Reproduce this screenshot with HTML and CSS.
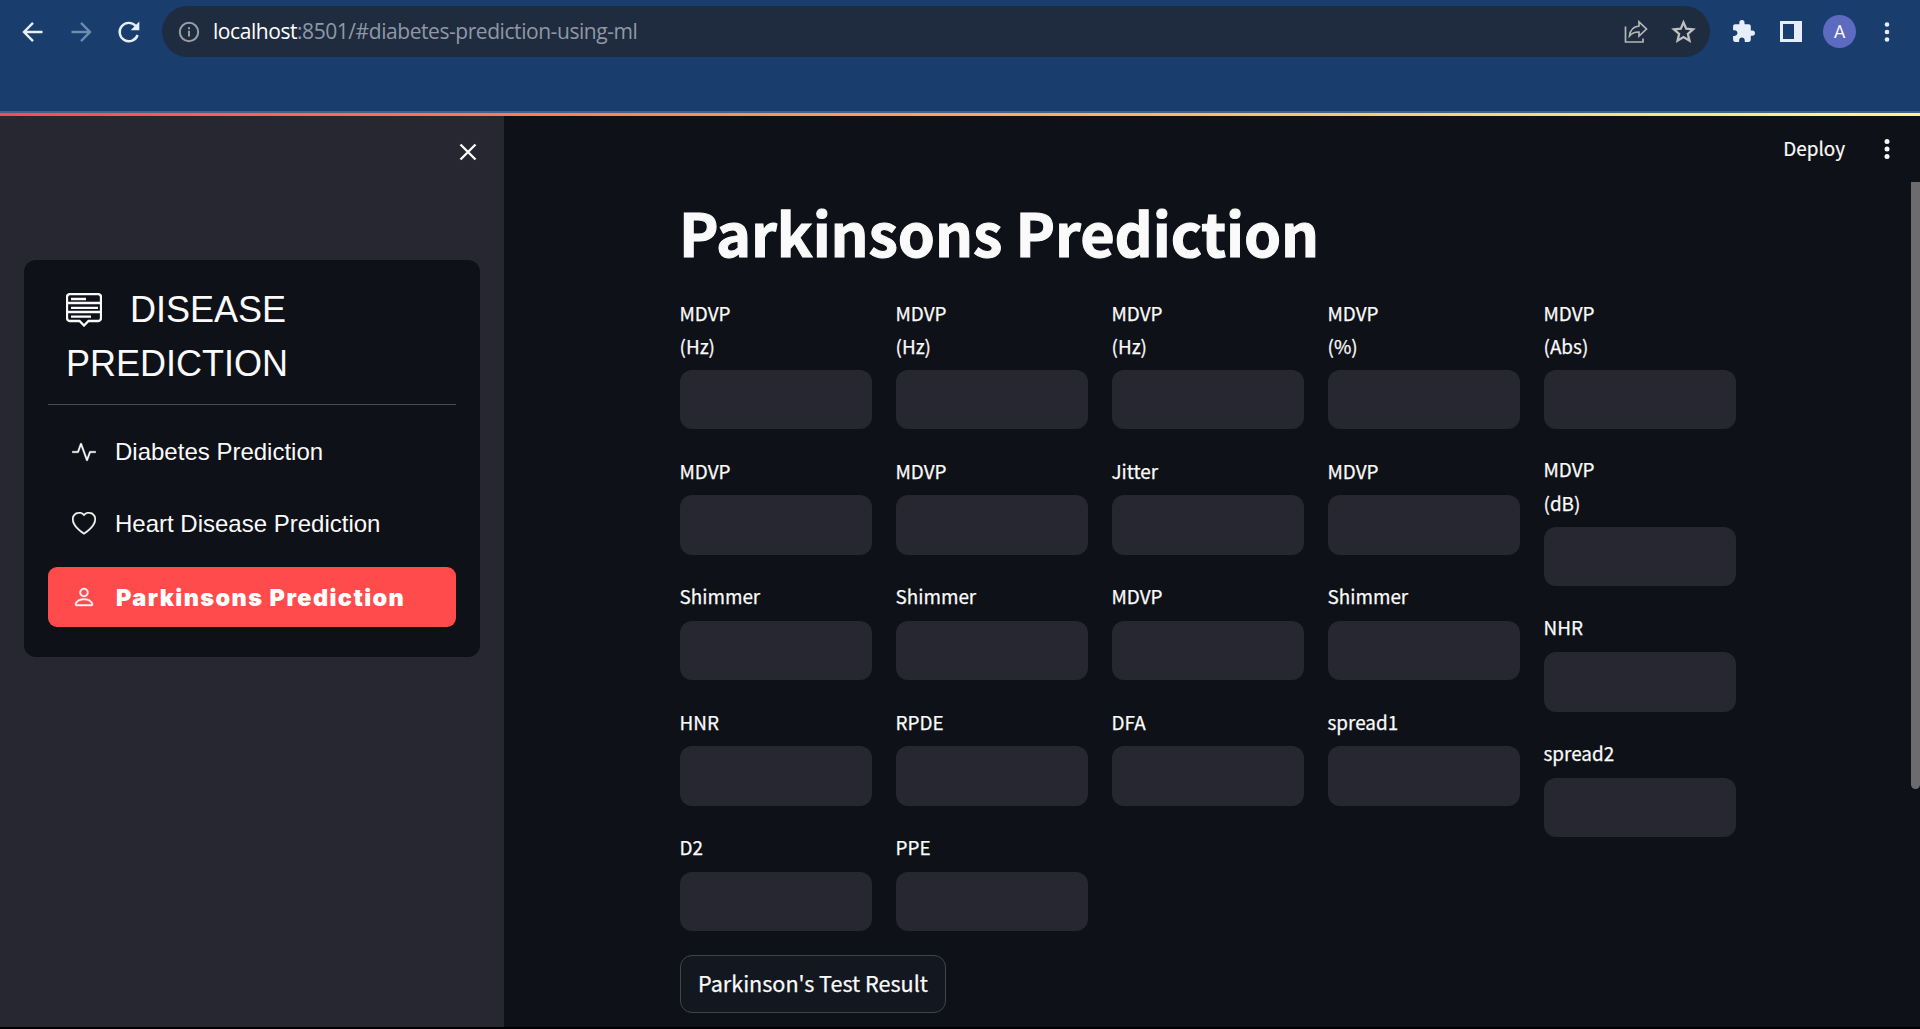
FILE: index.html
```html
<!DOCTYPE html>
<html lang="en">
<head>
<meta charset="utf-8">
<title>Parkinsons Prediction</title>
<link rel="stylesheet" href="styles.css">
</head>
<body>
<header class="browser">
  <nav class="toolbar">
    <svg class="nav-icon" viewBox="0 0 24 24"><path d="M21.5 12H3.5M12 2.8 3 12l9 9.2"/></svg>
    <svg class="nav-icon dim" viewBox="0 0 24 24"><path d="M2.5 12h18M12 2.8 21 12l-9 9.2"/></svg>
    <svg class="nav-icon" viewBox="0 0 24 24"><path d="M20.6 15A9.2 9.2 0 1 1 18.8 6"/><path class="solid" d="M22.3 1.6v8.6h-8.6z"/></svg>
    <div class="omnibox">
      <svg class="info" viewBox="0 0 22 22"><circle cx="11" cy="11" r="9.2"/><path d="M11 9.8v5.6M11 6.2v2"/></svg>
      <span class="url"><b>localhost</b>:8501/#diabetes-prediction-using-ml</span>
      <svg class="share" viewBox="0 0 24 24"><path d="M1.5 6.500V22H19v-3.500"/><path d="M15 1.800 22.500 9 15 16v-4c-4-.2-7 1-9.500 4 .5-6 4-9.400 9.500-10z"/></svg>
      <svg class="star" viewBox="0 0 24 24"><path d="M12 3.200l2.600 6.100 6.600.6-5 4.400 1.500 6.500-5.700-3.500-5.700 3.500 1.500-6.500-5-4.400 6.600-.6z"/></svg>
    </div>
    <svg class="puzzle" viewBox="0 0 24 24"><path d="M20.5 11H19V7c0-1.100-.9-2-2-2h-4V3.500a2.500 2.500 0 0 0-5 0V5H4c-1.100 0-1.990.9-1.990 2v3.800H3.500c1.490 0 2.700 1.210 2.700 2.700s-1.210 2.700-2.700 2.700H2V20c0 1.100.9 2 2 2h3.800v-1.500c0-1.490 1.210-2.700 2.700-2.700s2.700 1.210 2.700 2.700V22H17c1.100 0 2-.9 2-2v-4h1.500a2.500 2.500 0 0 0 0-5z"/></svg>
    <svg class="panel" viewBox="0 0 22 21"><path fill-rule="evenodd" d="M0 0h22v21H0zM3 3v15h11V3z"/></svg>
    <span class="avatar">A</span>
    <svg class="dots chrome-dots" viewBox="0 0 6 20"><circle cx="3" cy="2.500" r="2.300"/><circle cx="3" cy="10" r="2.300"/><circle cx="3" cy="17.500" r="2.300"/></svg>
  </nav>
</header>
<div class="decoration"></div>
<div class="app">
  <aside class="sidebar">
    <svg class="close" viewBox="0 0 18 18"><path d="M1.500 1.500l15 15M16.500 1.500l-15 15"/></svg>
    <section class="menu">
      <h2 class="menu-title"><svg class="menu-icon" viewBox="0 0 36 34"><path d="M4 1h28a3 3 0 0 1 3 3v21a3 3 0 0 1-3 3H22.500L18 32.500 13.500 28H4a3 3 0 0 1-3-3V4a3 3 0 0 1 3-3zM1 10h34M1 19h34"/><path d="M5 6h15M5 14.800h27M5 23.600h20"/></svg>DISEASE PREDICTION</h2>
      <ul class="links">
        <li class="link"><svg viewBox="0 0 16 16"><path d="M6 2a.5.5 0 0 1 .47.33L10 12.036l1.530-4.208A.5.5 0 0 1 12 7.500h3.500a.5.5 0 0 1 0 1h-3.150l-1.880 5.170a.5.5 0 0 1-.94 0L6 3.964 4.470 8.171A.5.5 0 0 1 4 8.500H.5a.5.5 0 0 1 0-1h3.150l1.880-5.170A.5.5 0 0 1 6 2Z"/></svg>Diabetes Prediction</li>
        <li class="link"><svg viewBox="0 0 16 16"><path d="m8 2.748-.717-.737C5.600.281 2.514.878 1.400 3.053c-.523 1.023-.641 2.500.314 4.385.92 1.815 2.834 3.989 6.286 6.357 3.452-2.368 5.365-4.542 6.286-6.357.955-1.886.838-3.362.314-4.385C13.486.878 10.400.28 8.717 2.010L8 2.748zM8 15C-7.333 4.868 3.279-3.040 7.824 1.143c.06.055.119.112.176.171a3.120 3.120 0 0 1 .176-.17C12.720-3.042 23.333 4.867 8 15z"/></svg>Heart Disease Prediction</li>
        <li class="link active"><svg viewBox="0 0 16 16"><path d="M8 8a3 3 0 1 0 0-6 3 3 0 0 0 0 6zm2-3a2 2 0 1 1-4 0 2 2 0 0 1 4 0zm4 8c0 1-1 1-1 1H3s-1 0-1-1 1-4 6-4 6 3 6 4zm-1-.004c-.001-.246-.154-.986-.832-1.664C11.516 10.680 10.289 10 8 10c-2.290 0-3.516.68-4.168 1.332-.678.678-.83 1.418-.832 1.664h10z"/></svg>Parkinsons Prediction</li>
      </ul>
    </section>
  </aside>
  <main class="main">
    <div class="app-bar"><span class="deploy">Deploy</span><svg class="dots" viewBox="0 0 6 20"><circle cx="3" cy="2.500" r="2.500"/><circle cx="3" cy="10" r="2.500"/><circle cx="3" cy="17.500" r="2.500"/></svg></div>
    <div class="scrollbar"></div>
    <div class="content">
      <h1 class="title">Parkinsons Prediction</h1>
      <div class="columns">
        <div class="column">
          <label class="field"><span class="label">MDVP<br>(Hz)</span><input class="input"></label>
          <label class="field"><span class="label">MDVP</span><input class="input"></label>
          <label class="field"><span class="label">Shimmer</span><input class="input"></label>
          <label class="field"><span class="label">HNR</span><input class="input"></label>
          <label class="field"><span class="label">D2</span><input class="input"></label>
        </div>
        <div class="column">
          <label class="field"><span class="label">MDVP<br>(Hz)</span><input class="input"></label>
          <label class="field"><span class="label">MDVP</span><input class="input"></label>
          <label class="field"><span class="label">Shimmer</span><input class="input"></label>
          <label class="field"><span class="label">RPDE</span><input class="input"></label>
          <label class="field"><span class="label">PPE</span><input class="input"></label>
        </div>
        <div class="column">
          <label class="field"><span class="label">MDVP<br>(Hz)</span><input class="input"></label>
          <label class="field"><span class="label">Jitter</span><input class="input"></label>
          <label class="field"><span class="label">MDVP</span><input class="input"></label>
          <label class="field"><span class="label">DFA</span><input class="input"></label>
        </div>
        <div class="column">
          <label class="field"><span class="label">MDVP<br>(%)</span><input class="input"></label>
          <label class="field"><span class="label">MDVP</span><input class="input"></label>
          <label class="field"><span class="label">Shimmer</span><input class="input"></label>
          <label class="field"><span class="label">spread1</span><input class="input"></label>
        </div>
        <div class="column">
          <label class="field"><span class="label">MDVP<br>(Abs)</span><input class="input"></label>
          <label class="field"><span class="label">MDVP<br>(dB)</span><input class="input"></label>
          <label class="field"><span class="label">NHR</span><input class="input"></label>
          <label class="field"><span class="label">spread2</span><input class="input"></label>
        </div>
      </div>
      <button class="button">Parkinson's Test Result</button>
    </div>
  </main>
</div>
</body>
</html>
```
FILE: styles.css
```css
* { box-sizing: border-box; }
body {
  margin: 0;
  height: 1029px;
  display: flex;
  flex-direction: column;
  overflow: hidden;
  background: #0e1117;
  color: #fafafa;
  font-family: "Noto Sans CJK SC", "Noto Sans", sans-serif;
  border-bottom: 2px solid #000;
}
svg { display: block; flex: none; }

/* Browser chrome */
.browser { flex: none; height: 113px; padding-top: 6px; background: #193d6c; border-bottom: 2px solid #40618a; }
.toolbar { display: flex; align-items: center; height: 51px; padding-left: 21px; }
.nav-icon { width: 24px; height: 24px; margin-right: 24px; fill: none; stroke: #e6eefb; stroke-width: 2.4; }
.nav-icon .solid { fill: #e6eefb; stroke: none; }
.nav-icon.dim { stroke: #6f8bb0; }
.omnibox {
  display: flex; align-items: center; width: 1548px; height: 51px; margin-left: -3px;
  padding: 0 14px 0 16px; border-radius: 26px; background: #1f2c40;
}
.info { width: 22px; height: 22px; fill: none; stroke: #9a9da2; stroke-width: 2; }
.url {
  flex: 1; margin-left: 13px; padding-bottom: 2px; font: 21px/28px "Open Sans", "Noto Sans", sans-serif;
  color: #8f98a5; letter-spacing: -0.44px; white-space: nowrap;
}
.url b { font-weight: 400; color: #fff; }
.share { width: 24px; height: 24px; margin-right: 23px; fill: none; stroke: #b3b5b8; stroke-width: 1.7; }
.star { width: 25px; height: 25px; fill: none; stroke: #c0c0c0; stroke-width: 2.2; }
.puzzle { width: 25px; height: 25px; margin-left: 21px; fill: #e6eefb; }
.panel { width: 22px; height: 21px; margin-left: 24px; fill: #e6eefb; }
.avatar {
  width: 33px; height: 33px; margin-left: 21px; border-radius: 50%; background: #5c6bc0;
  font: 18px/33px Roboto, sans-serif; text-align: center;
}
.dots { width: 6px; height: 20px; fill: #fafafa; }
.chrome-dots { margin-left: 28px; fill: #e6eefb; }
.decoration { flex: none; height: 3px; background: linear-gradient(90deg, #ff4b4b, #fffd80); }

/* Sidebar */
.app { flex: 1; display: flex; min-height: 0; }
.sidebar { width: 504px; padding: 27px 24px 0; background: #262730; }
.close { width: 18px; height: 18px; margin: 0 3px 99px auto; fill: none; stroke: #fafafa; stroke-width: 2.4; }
.menu {
  height: 397px; padding: 23px 24px 24px; border-radius: 12px; background: #0e1117;
  font-family: "Liberation Sans", Arial, sans-serif;
}
.menu-title {
  height: 122px; margin: 0 0 18px; padding: 0 18px; border-bottom: 1px solid #4a4c50;
  font-size: 36px; font-weight: 400; line-height: 54px;
}
.menu-icon { display: inline-block; width: 36px; height: 34px; margin-right: 28px; vertical-align: -5px; fill: none; stroke: #fafafa; stroke-width: 2.3; }
.links { display: flex; flex-direction: column; gap: 12px; margin: 0; padding: 0; list-style: none; }
.link { display: flex; align-items: center; gap: 19px; height: 60px; padding: 0 0 2px 24px; border-radius: 9px; font-size: 24px; }
.link svg { width: 24px; height: 24px; fill: #fafafa; stroke: #fafafa; stroke-width: 0.25; }
.link.active { gap: 20px; padding-bottom: 0; background: #ff4b4b; color: #fff; font-family: Inter, "Liberation Sans", sans-serif; font-size: 23.500px; font-weight: 900; letter-spacing: 1.400px; }

/* Form */
.main { position: relative; flex: 1; }
.app-bar { display: flex; align-items: center; justify-content: flex-end; height: 66px; padding-right: 30px; }
.deploy { margin-right: 39px; padding-bottom: 2px; font-size: 18.900px; line-height: 30px; -webkit-text-stroke: 0.2px; }
.scrollbar { position: absolute; top: 66px; right: 0; width: 9px; height: 607px; border-radius: 0 0 4.500px 4.500px; background: #6b6b70; }
.content { width: 1056px; margin-left: 176px; }
.title {
  margin: 0 0 0 -1px; padding-top: 10px; height: 114.800px; font-size: 59.400px; font-weight: 700; line-height: 79px;
  letter-spacing: -0.1px; white-space: nowrap; -webkit-text-stroke: 1.100px;
}
.columns { display: grid; grid-template-columns: repeat(5, 192px); gap: 24px; margin-bottom: 23.700px; }
.column { display: flex; flex-direction: column; gap: 24px; }
.field { display: block; }
.label {
  display: flex; align-items: center; min-height: 36px; margin: -1px 0 7px -0.500px;
  font-size: 18.900px; line-height: 33.600px; -webkit-text-stroke: 0.250px;
}
.input { display: block; width: 192px; height: 59.500px; padding: 0 12px; border: 0; border-radius: 12px; background: #262730; color: #fafafa; font: inherit; }
.button {
  display: block; width: 266px; height: 58px; padding: 0 0 2px; border: 1px solid #41444c; border-radius: 12px;
  background: #131720; color: #fafafa; font-family: inherit; font-size: 21.600px; line-height: 38px; white-space: nowrap; -webkit-text-stroke: 0.250px;
}
```
